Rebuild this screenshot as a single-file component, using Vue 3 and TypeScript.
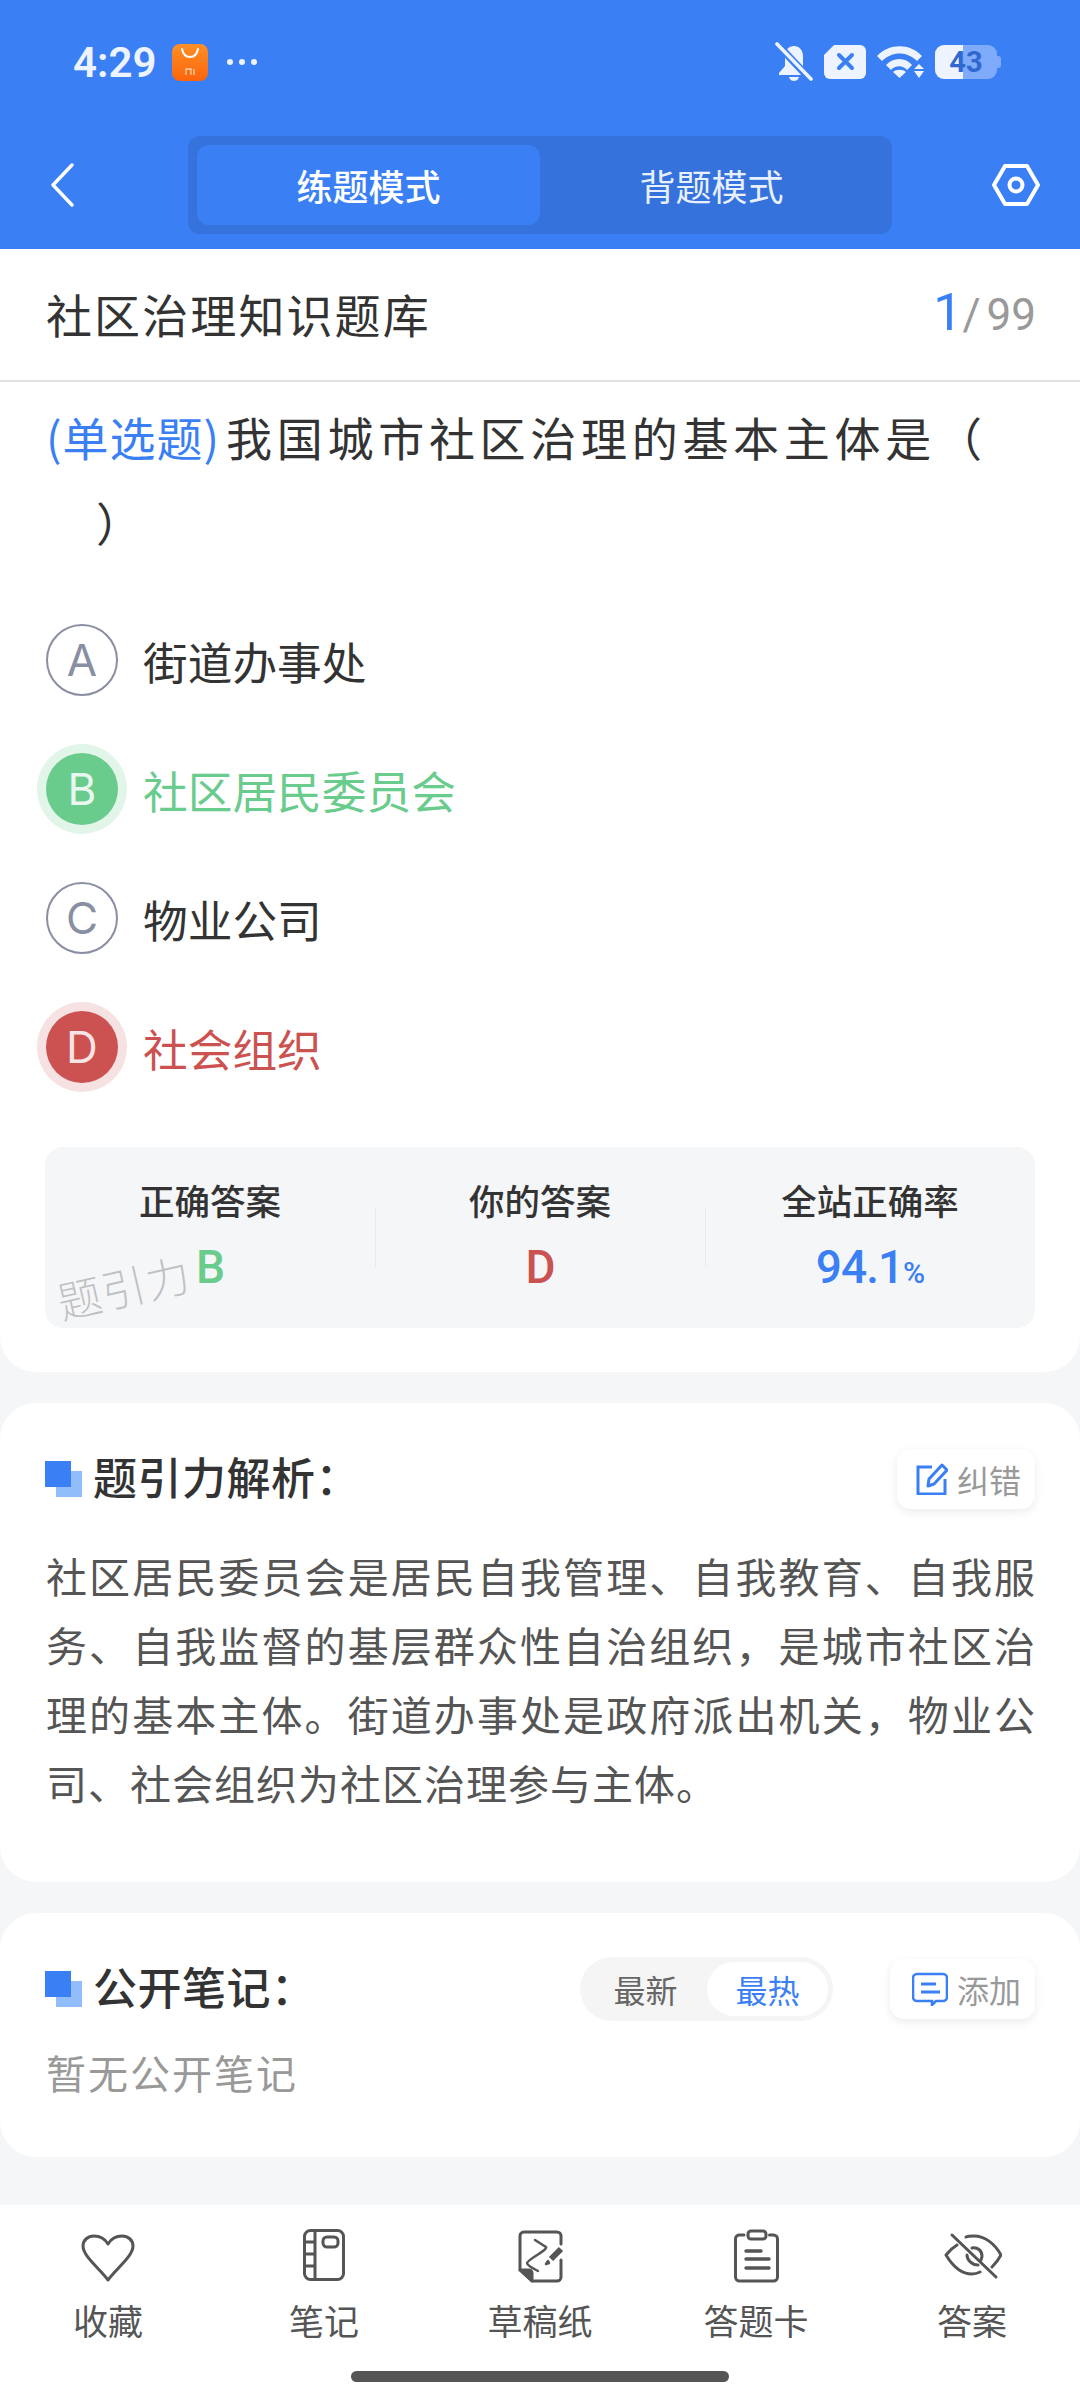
<script setup lang="ts">
type Option = { key: string; text: string; state?: "right" | "wrong" };

const options: Option[] = [
  { key: "A", text: "街道办事处" },
  { key: "B", text: "社区居民委员会", state: "right" },
  { key: "C", text: "物业公司" },
  { key: "D", text: "社会组织", state: "wrong" },
];

const tabs = ["收藏", "笔记", "草稿纸", "答题卡", "答案"];
</script>

<template>
  <div class="page">
    <header class="top">
      <div class="status">
        <span class="time">4:29</span>
        <svg class="app-icon" width="36" height="37" viewBox="0 0 36 37">
          <defs>
            <linearGradient id="shop" x1="0" y1="0" x2="0" y2="1">
              <stop offset="0" stop-color="#ff8f26" />
              <stop offset="1" stop-color="#fb640c" />
            </linearGradient>
          </defs>
          <rect width="36" height="37" rx="8" fill="url(#shop)" />
          <path d="M10 5c1 5 4 8 8 8s7-3 8-8" fill="none" stroke="#fff" stroke-width="2" stroke-linecap="round" />
          <path d="M14 31v-6h5v6M22 25v6" fill="none" stroke="#ffd0a0" stroke-width="1.3" />
        </svg>
        <span class="dots"><i></i><i></i><i></i></span>
        <div class="status-right">
          <svg width="38" height="40" viewBox="0 0 38 40">
            <path d="M10 14c0-6 4-10 9-10s9 4 9 10v13l5 5v1H4v-2l6-7z" fill="#edf3ff" />
            <path d="M14 35h10c-1 3-3 4-5 4s-4-1-5-4z" fill="#edf3ff" />
            <path d="M2 2l34 36" stroke="#3b7ff5" stroke-width="7.5" />
            <path d="M2 2l34 35" stroke="#edf3ff" stroke-width="3.6" stroke-linecap="round" />
          </svg>
          <svg width="44" height="36" viewBox="0 0 44 36">
            <path d="M11 1h26a6 6 0 0 1 6 6v22a6 6 0 0 1-6 6H7a6 6 0 0 1-6-6V11z" fill="#edf3ff" />
            <path d="M16 11l13 13M29 11L16 24" stroke="#3b7ff5" stroke-width="4" stroke-linecap="round" />
          </svg>
          <svg width="48" height="34" viewBox="0 0 48 34">
            <path d="M0 11C12-2 33-2 45 11l-5 5C30 6 15 6 5 16z" fill="#edf3ff" />
            <path d="M9 20c7-8 20-8 26 0l-5 5c-4-5-12-5-16 0z" fill="#edf3ff" />
            <path d="M16 27c3-3 10-3 13 0l-6.500 6z" fill="#edf3ff" />
            <path d="M42 19l5 5H37zM37 26h10l-5 7z" fill="#edf3ff" />
          </svg>
          <div class="battery">
            <div class="battery-fill"></div>
            <span>43</span>
          </div>
        </div>
      </div>
      <nav class="nav">
        <svg class="back" width="24" height="44" viewBox="0 0 24 44">
          <path d="M22 2L3 22l19 20" fill="none" stroke="#fff" stroke-width="3.4" stroke-linecap="round" stroke-linejoin="round" />
        </svg>
        <div class="mode">
          <div class="mode-item active">练题模式</div>
          <div class="mode-item">背题模式</div>
        </div>
        <svg class="gear" width="48" height="44" viewBox="0 0 48 44">
          <path d="M13 3h22l11 19-11 19H13L2 22z" fill="none" stroke="#fff" stroke-width="4" stroke-linejoin="round" />
          <circle cx="24" cy="22" r="6.500" fill="none" stroke="#fff" stroke-width="4" />
        </svg>
      </nav>
    </header>

    <main class="content">
      <section class="card first">
        <div class="title-row">
          <span class="bank">社区治理知识题库</span>
          <span class="count"><b>1</b><i>/</i>99</span>
        </div>
        <div class="question">
          <p><span class="qtype">(单选题)</span>我国城市社区治理的基本主体是（<br /><span class="close">）</span></p>
        </div>
        <ul class="options">
          <li v-for="o in options" :key="o.key" class="option" :class="o.state">
            <span class="circle">{{ o.key }}</span>
            <span class="opt-text">{{ o.text }}</span>
          </li>
        </ul>
        <div class="stats">
          <div class="stat">
            <div class="stat-label">正确答案</div>
            <div class="stat-value green">B</div>
          </div>
          <div class="stat">
            <div class="stat-label">你的答案</div>
            <div class="stat-value red">D</div>
          </div>
          <div class="stat">
            <div class="stat-label">全站正确率</div>
            <div class="stat-value blue">94.1<small>%</small></div>
          </div>
          <span class="watermark">题引力</span>
        </div>
      </section>

      <section class="card analysis">
        <div class="sec-head">
          <span class="mark"><i></i><i></i></span>
          <h2>题引力解析：</h2>
          <button class="chip fix">
            <svg width="32" height="32" viewBox="0 0 32 32">
              <path d="M16 4H2v27h27V16" fill="none" stroke="#3b7ff5" stroke-width="3" />
              <path d="M26 2l5 5-13 14-6 2 1-7z" fill="none" stroke="#3b7ff5" stroke-width="3" stroke-linejoin="round" />
            </svg>
            纠错
          </button>
        </div>
        <p class="analysis-text">社区居民委员会是居民自我管理、自我教育、自我服务、自我监督的基层群众性自治组织，是城市社区治理的基本主体。街道办事处是政府派出机关，物业公司、社会组织为社区治理参与主体。</p>
      </section>

      <section class="card notes">
        <div class="sec-head">
          <span class="mark"><i></i><i></i></span>
          <h2>公开笔记：</h2>
          <div class="seg">
            <span class="seg-item">最新</span>
            <span class="seg-item on">最热</span>
          </div>
          <button class="chip add">
            <svg width="36" height="34" viewBox="0 0 36 34">
              <path d="M5 2h26a4 4 0 0 1 4 4v19a4 4 0 0 1-4 4h-7l-4 4v-4H5a4 4 0 0 1-4-4V6a4 4 0 0 1 4-4z" fill="none" stroke="#3b7ff5" stroke-width="2.600" />
              <path d="M9 12h15M9 20h19" stroke="#3b7ff5" stroke-width="3" />
            </svg>
            添加
          </button>
        </div>
        <p class="empty">暂无公开笔记</p>
      </section>
    </main>

    <footer class="bottom">
      <div class="tabs">
        <div v-for="(t, i) in tabs" :key="t" class="tab">
          <svg width="60" height="56" viewBox="0 0 60 56" fill="none" stroke="#555" stroke-width="3" stroke-linejoin="round" stroke-linecap="round">
            <template v-if="i === 0">
              <path d="M30 51C20 38 5 27 5 17 5 11 10 7 16 7c6 0 11 3 14 8 3-5 8-8 14-8 6 0 11 4 11 10 0 10-15 21-25 34z" />
            </template>
            <template v-else-if="i === 1">
              <rect x="10.500" y="1.500" width="39" height="49" rx="6" />
              <path d="M21 1.500v49M10.500 13h10.500M10.500 25h10.500M10.500 37h10.500" />
              <rect x="29" y="8" width="15" height="10" rx="4" />
            </template>
            <template v-else-if="i === 2">
              <path d="M51 15V7a4 4 0 0 0-4-4H14a4 4 0 0 0-4 4v34l12 11h25a4 4 0 0 0 4-4V31" />
              <path d="M10 41h9a3 3 0 0 1 3 3v8z" fill="#555" />
              <path d="M25 11l11 7c2 3-18 12-19 16 0 2 7 6 11 8" stroke-width="2.500" />
              <path d="M51 20L41 30" stroke-width="6" stroke-linecap="butt" />
              <path d="M38 32l-2 3 3-1z" stroke-width="2.500" />
            </template>
            <template v-else-if="i === 3">
              <path d="M18 6h-4a4 4 0 0 0-4.500 4v38a4 4 0 0 0 4 4h34a4 4 0 0 0 4-4V10a4 4 0 0 0-4-4h-4" />
              <rect x="22" y="2" width="18" height="8" rx="3" />
              <path d="M20 22h15M20 30h23M20 39h23" stroke-width="3.400" />
            </template>
            <template v-else>
              <path d="M15 16C10 19 7 22 4 26c6 10 15 19 26 19 3 0 6-1 8-2M24 8c2-1 5-1 8-1 11 0 21 8 27 19-2 4-5 8-9 12" />
              <path d="M25 26c0 5 5 10 11 10M30 19c6-1 10 3 10 8 0 2-1 3-1 4" />
              <path d="M10 6l44 42" />
            </template>
          </svg>
          <span>{{ t }}</span>
        </div>
      </div>
      <div class="home-bar"></div>
    </footer>
  </div>
</template>

<style scoped>
.page {
  width: 1080px;
  height: 2400px;
  display: flex;
  flex-direction: column;
  overflow: hidden;
  background: #f5f6f8;
  font-family: "Noto Sans CJK SC", "Noto Sans", sans-serif;
  color: #333;
}
.top {
  height: 249px;
  background: #3b7ff5;
  flex: none;
}
.status {
  height: 124px;
  padding: 0 83px 0 73px;
  display: flex;
  align-items: center;
  color: #edf3ff;
}
.time {
  font-family: Roboto, sans-serif;
  font-size: 42px;
  font-weight: 600;
  width: 99px;
}
.dots {
  display: flex;
  gap: 6px;
  margin-left: 19px;
}
.dots i {
  width: 6px;
  height: 6px;
  border-radius: 50%;
  background: #edf3ff;
}
.status-right {
  margin-left: auto;
  display: flex;
  align-items: center;
  gap: 10px;
}
.battery {
  position: relative;
  width: 62px;
  height: 34px;
  border-radius: 9px;
  background: #80aafa;
  display: flex;
  align-items: center;
  justify-content: center;
  font-family: Roboto, sans-serif;
  font-size: 29px;
  font-weight: 700;
  color: #2f68d0;
}
.battery::after {
  content: "";
  position: absolute;
  right: -4px;
  top: 11px;
  width: 4px;
  height: 12px;
  border-radius: 0 3px 3px 0;
  background: #80aafa;
}
.battery-fill {
  position: absolute;
  left: 0;
  top: 0;
  bottom: 0;
  width: 28px;
  border-radius: 9px 0 0 9px;
  background: #edf3ff;
}
.battery span {
  position: relative;
}
.nav {
  height: 98px;
  margin-top: 12px;
  padding: 0 40px 0 50px;
  display: flex;
  align-items: center;
}
.mode {
  margin-left: 114px;
  width: 704px;
  height: 98px;
  padding: 9px;
  box-sizing: border-box;
  background: #3672dc;
  border-radius: 12px;
  display: flex;
}
.mode-item {
  flex: 1;
  display: flex;
  align-items: center;
  justify-content: center;
  font-size: 36px;
  color: #e8f0ff;
  border-radius: 12px;
}
.mode-item.active {
  background: #3b7ff5;
  color: #fff;
  font-weight: 500;
}
.gear {
  margin-left: auto;
}
.content {
  flex: 1;
  display: flex;
  flex-direction: column;
  gap: 31px;
}
.card {
  background: #fff;
  border-radius: 36px;
}
.first {
  border-radius: 0 0 36px 36px;
  height: 1123px;
  padding-bottom: 44px;
  box-sizing: border-box;
}
.title-row {
  height: 133px;
  padding: 0 44px 4px 46px;
  box-sizing: border-box;
  border-bottom: 2px solid #e2e2e2;
  display: flex;
  align-items: center;
  justify-content: space-between;
}
.bank {
  font-size: 46px;
  letter-spacing: 2.100px;
  color: #333;
}
.count {
  font-size: 44px;
  color: #999;
  font-family: Roboto, sans-serif;
}
.count b {
  font-weight: 400;
  font-size: 52px;
  color: #3b7ff5;
}
.count i {
  font-style: normal;
  margin: 0 6px 0 0;
}
.question {
  padding: 12px 46px 0;
}
.question p {
  margin: 0;
  font-size: 46px;
  line-height: 85px;
  letter-spacing: 4.700px;
  white-space: nowrap;
}
.qtype {
  color: #3b7ff5;
  letter-spacing: 1px;
  margin-right: 6px;
}
.close {
  margin-left: 50px;
}
.options {
  list-style: none;
  margin: 60px 0 0;
  padding: 0 46px;
  display: flex;
  flex-direction: column;
  gap: 57px;
}
.option {
  height: 72px;
  display: flex;
  align-items: center;
  gap: 25px;
  font-size: 44.700px;
  color: #333;
}
.circle {
  width: 72px;
  height: 72px;
  box-sizing: border-box;
  border: 2px solid #8a8ea3;
  border-radius: 50%;
  display: flex;
  align-items: center;
  justify-content: center;
  font-family: Inter, sans-serif;
  font-size: 44px;
  color: #8a8ea3;
  flex: none;
}
.option.right {
  color: #69cb8c;
}
.option.right .circle {
  background: #69cb8c;
  border: 0;
  color: #e8f8ee;
  box-shadow: 0 0 0 9px #e2f5e9;
}
.option.wrong {
  color: #cb5250;
}
.option.wrong .circle {
  background: #cb5250;
  border: 0;
  color: #f8e4e4;
  box-shadow: 0 0 0 9px #f6e2e2;
}
.stats {
  position: relative;
  margin: 64px 45px 0 45px;
  height: 181px;
  background: #f5f6f8;
  border-radius: 18px;
  display: grid;
  grid-template-columns: repeat(3, 1fr);
}
.stat {
  position: relative;
  display: flex;
  flex-direction: column;
  align-items: center;
  padding-top: 29px;
}
.stat + .stat::before {
  content: "";
  position: absolute;
  left: 0;
  top: 61px;
  height: 59px;
  width: 1px;
  background: #e8eaee;
}
.stat-label {
  font-size: 35.500px;
  line-height: 48px;
  font-weight: 500;
  color: #333;
}
.stat-value {
  margin-top: 17px;
  font-family: Roboto, sans-serif;
  font-size: 46px;
  line-height: 52px;
  font-weight: 500;
  letter-spacing: -1px;
}
.stat-value small {
  font-size: 30px;
}
.green {
  color: #69cb8c;
}
.red {
  color: #cb5250;
}
.blue {
  color: #3b7ff5;
}
.watermark {
  position: absolute;
  left: 11px;
  top: 113px;
  font-size: 44px;
  font-weight: 300;
  line-height: 52px;
  letter-spacing: 1px;
  color: rgba(0, 0, 0, 0.22);
  transform: rotate(-13deg);
}
.analysis {
  height: 479px;
  padding: 46px 45px 0 45px;
  box-sizing: border-box;
}
.notes {
  height: 244px;
  padding: 46px 45px 0 45px;
  box-sizing: border-box;
}
.sec-head {
  height: 60px;
  display: flex;
  align-items: center;
}
.mark {
  position: relative;
  width: 37px;
  height: 36px;
  margin-right: 11px;
  flex: none;
}
.mark i:first-child {
  position: absolute;
  left: 0;
  top: 0;
  width: 26px;
  height: 26px;
  background: #3b7ff5;
  z-index: 1;
}
.mark i:last-child {
  position: absolute;
  right: 0;
  bottom: 0;
  width: 26px;
  height: 26px;
  background: #92bdfb;
}
h2 {
  margin: 0 0 6px;
  font-size: 44px;
  font-weight: 500;
  letter-spacing: 0.500px;
  color: #333;
}
.chip {
  height: 60px;
  margin-left: auto;
  padding: 0 14px 0 19px;
  border: 0;
  border-radius: 14px;
  background: #fff;
  box-shadow: 0 3px 10px rgba(0, 0, 0, 0.08);
  display: flex;
  align-items: center;
  gap: 9px;
  font-family: inherit;
  font-size: 32px;
  color: #999;
}
.add {
  margin-left: 57px;
  padding: 0 14px 0 22px;
}
.analysis-text {
  margin: 32px -1px 0 1px;
  font-size: 41px;
  line-height: 69px;
  letter-spacing: 1px;
  color: #555;
  text-align: justify;
}
.seg {
  margin-left: auto;
  width: 253px;
  height: 64px;
  padding: 5px;
  box-sizing: border-box;
  background: #f5f5f5;
  border-radius: 32px;
  display: flex;
  justify-content: space-between;
  font-size: 32px;
  color: #666;
}
.seg-item {
  width: 121px;
  display: flex;
  align-items: center;
  justify-content: center;
  border-radius: 27px;
}
.seg-item.on {
  background: #fff;
  color: #3b7ff5;
}
.empty {
  margin: 24px 0 0 1px;
  font-size: 40px;
  line-height: 58px;
  letter-spacing: 2px;
  color: #999;
}
.bottom {
  height: 195px;
  flex: none;
  background: #fff;
  display: flex;
  flex-direction: column;
}
.tabs {
  display: grid;
  grid-template-columns: repeat(5, 216px);
  padding-top: 24px;
}
.tab {
  display: flex;
  flex-direction: column;
  align-items: center;
  font-size: 35px;
  line-height: 50px;
  color: #555;
  gap: 10px;
}
.home-bar {
  width: 378px;
  height: 11px;
  margin: 26px auto 0;
  border-radius: 6px;
  background: #555;
}
</style>
